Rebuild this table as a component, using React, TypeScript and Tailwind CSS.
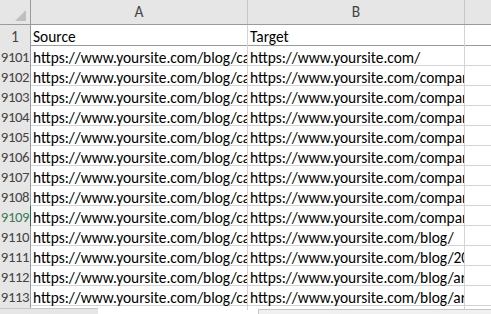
const rows: [string, string, string][] = [
  ['9101', 'https://www.yoursite.com/blog/category/news/', 'https://www.yoursite.com/'],
  ['9102', 'https://www.yoursite.com/blog/category/news/', 'https://www.yoursite.com/company/'],
  ['9103', 'https://www.yoursite.com/blog/category/news/', 'https://www.yoursite.com/company/'],
  ['9104', 'https://www.yoursite.com/blog/category/news/', 'https://www.yoursite.com/company/'],
  ['9105', 'https://www.yoursite.com/blog/category/news/', 'https://www.yoursite.com/company/'],
  ['9106', 'https://www.yoursite.com/blog/category/news/', 'https://www.yoursite.com/company/'],
  ['9107', 'https://www.yoursite.com/blog/category/news/', 'https://www.yoursite.com/company/'],
  ['9108', 'https://www.yoursite.com/blog/category/news/', 'https://www.yoursite.com/company/'],
  ['9109', 'https://www.yoursite.com/blog/category/news/', 'https://www.yoursite.com/company/'],
  ['9110', 'https://www.yoursite.com/blog/category/news/', 'https://www.yoursite.com/blog/'],
  ['9111', 'https://www.yoursite.com/blog/category/news/', 'https://www.yoursite.com/blog/2019/'],
  ['9112', 'https://www.yoursite.com/blog/category/news/', 'https://www.yoursite.com/blog/archive/'],
  ['9113', 'https://www.yoursite.com/blog/category/news/', 'https://www.yoursite.com/blog/archive/'],
  ['9114', 'https://www.yoursite.com/blog/category/news/', 'https://www.yoursite.com/blog/archive/'],
];

const font = { fontFamily: 'Carlito, Lato, "Liberation Sans", sans-serif' };

export default function App() {
  return (
    <div className="relative w-[491px] h-[314px] overflow-hidden bg-white text-[15.4px] text-black" style={font}>
      {/* column headers */}
      <div className="grid grid-cols-[31px_217px_217px_1fr] h-[25px] bg-[#e6e6e6] border-b border-[#9b9b9b]">
        <div className="relative border-r border-[#9b9b9b]">
          <div className="absolute right-[4px] bottom-[3px] w-0 h-0 border-l-[11px] border-l-transparent border-b-[11px] border-b-[#bfbfbf]" />
        </div>
        <div className="flex items-center justify-center border-r border-[#c6c6c6] text-[#444]">A</div>
        <div className="flex items-center justify-center border-r border-[#c6c6c6] text-[#444]">B</div>
        <div />
      </div>

      {/* row 1 */}
      <div className="grid grid-cols-[31px_217px_217px_1fr] h-[21px] border-b border-[#9b9b9b]">
        <div className="flex items-center justify-center bg-[#e6e6e6] border-r border-[#9b9b9b] text-[#444]">1</div>
        <div className="flex items-center px-[2px] border-r border-[#d4d4d4]">Source</div>
        <div className="flex items-center px-[2px] border-r border-[#d4d4d4]">Target</div>
        <div />
      </div>

      {rows.map(([n, a, b]) => (
        <div key={n} className="grid grid-cols-[31px_217px_217px_1fr] h-[20px] border-b border-[#d4d4d4]">
          <div
            className={`flex items-center justify-center bg-[#e6e6e6] border-r text-[14.8px] tracking-[-0.4px] ${
              n === '9109' ? 'border-[#217346] text-[#3f7a5a]' : 'border-[#9b9b9b] text-[#444]'
            }`}
          >
            {n}
          </div>
          <div className="flex items-center px-[2px] border-r border-[#d4d4d4] overflow-hidden whitespace-nowrap">{a}</div>
          <div className="flex items-center px-[2px] border-r border-[#d4d4d4] overflow-hidden whitespace-nowrap">{b}</div>
          <div />
        </div>
      ))}

      {/* bottom tab / scroll bar strip */}
      <div className="absolute left-0 right-0 top-[308px] bottom-0 flex">
        <div className="w-[98px] bg-[#e6e6e6] border-t border-[#c6c6c6]" />
        <div className="w-[160px] mt-[2px] bg-white" />
        <div className="flex-1 mt-[1px] bg-[#f0f0f0] border-t border-l border-[#c6c6c6]" />
      </div>
    </div>
  );
}
